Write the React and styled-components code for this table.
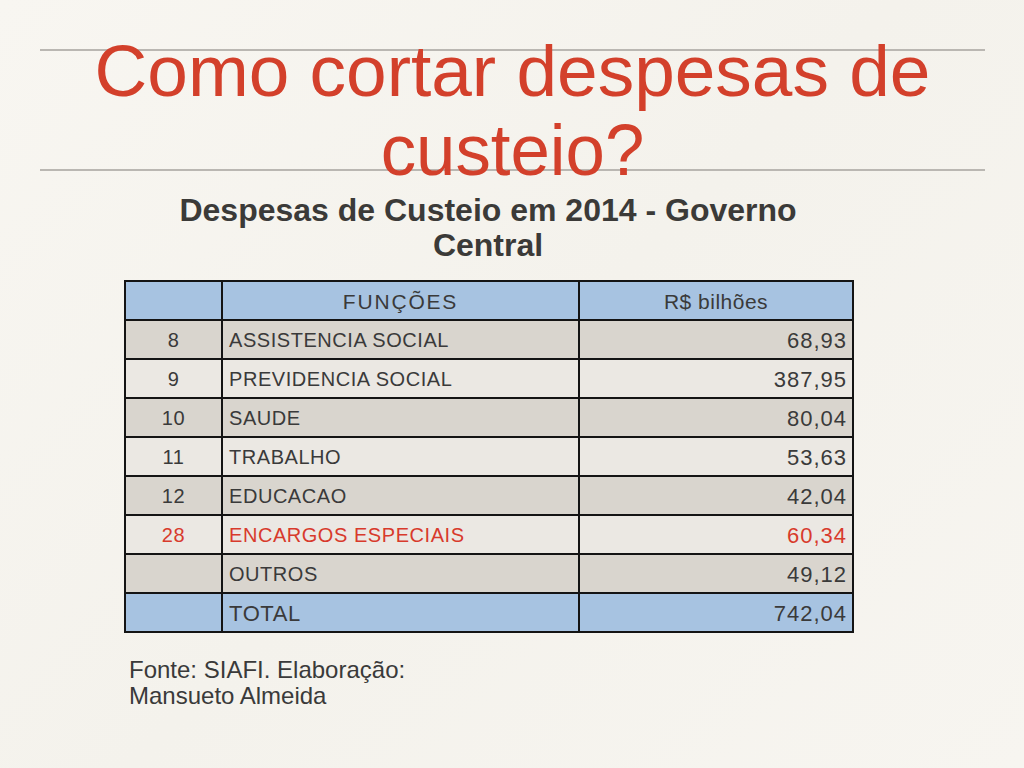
import React from "react";
import styled, { createGlobalStyle } from "styled-components";

const GlobalStyle = createGlobalStyle`
  body {
    margin: 0;
    background: #f6f4ef;
    font-family: "Liberation Sans", Arial, sans-serif;
  }
`;

const Page = styled.div`
  width: 1024px;
  height: 768px;
  overflow: hidden;
  display: flex;
  flex-direction: column;
  align-items: flex-start;
  background: linear-gradient(135deg, #f8f6f1 0%, #f4f2ec 50%, #f7f5f0 100%);
`;

const TitleBox = styled.div`
  align-self: stretch;
  margin: 49px 39px 0 40px;
  height: 118px;
  border-top: 2px solid #bab7b2;
  border-bottom: 2px solid #bab7b2;
`;

const Title = styled.h1`
  margin: -20px 0 0;
  font-weight: 400;
  font-size: 73px;
  line-height: 79px;
  color: #d3402b;
  text-align: center;
`;

const TitleLine = styled.span`
  display: block;
  transform: scaleX(${(p) => p.squeeze || 1});
  white-space: nowrap;
`;

const Subtitle = styled.h2`
  align-self: stretch;
  margin: 22px 0 0 -48px;
  font-size: 32px;
  line-height: 35px;
  font-weight: 700;
  color: #3b3a38;
  text-align: center;
`;

const SubLine = styled.span`
  display: block;
  white-space: nowrap;
`;

const Table = styled.div`
  margin: 17px 0 0 124px;
  display: grid;
  grid-template-columns: 95px 355px 272px;
  grid-auto-rows: 37px;
  gap: 2px;
  padding: 2px;
  background: #141414;
`;

const Cell = styled.div`
  display: flex;
  align-items: center;
  justify-content: ${(p) =>
    p.align === "right" ? "flex-end" : p.align === "center" ? "center" : "flex-start"};
  padding: 2px ${(p) => (p.align === "right" ? "5px" : "0")} 0
    ${(p) => (p.align === "left" ? "6px" : "0")};
  background: ${(p) =>
    p.tone === "blue" ? "#a7c3e1" : p.tone === "dark" ? "#d9d5ce" : "#ebe8e3"};
  color: ${(p) => (p.red ? "#d83a2c" : "#3a3a3a")};
  font-size: ${(p) => p.size || 20}px;
  letter-spacing: ${(p) => (p.spacing !== undefined ? p.spacing : 0.55)}px;
  white-space: nowrap;
`;

const Source = styled.p`
  margin: 24px 0 0 129px;
  font-size: 24px;
  line-height: 26px;
  color: #3a3a3a;
`;

const rows = [
  { code: "8", name: "ASSISTENCIA SOCIAL", value: "68,93" },
  { code: "9", name: "PREVIDENCIA SOCIAL", value: "387,95" },
  { code: "10", name: "SAUDE", value: "80,04" },
  { code: "11", name: "TRABALHO", value: "53,63" },
  { code: "12", name: "EDUCACAO", value: "42,04" },
  { code: "28", name: "ENCARGOS ESPECIAIS", value: "60,34", red: true },
  { code: "", name: "OUTROS", value: "49,12" },
];

function App() {
  return (
    <Page>
      <GlobalStyle />
      <TitleBox>
        <Title>
          <TitleLine squeeze={1}>Como cortar despesas de</TitleLine>
          <TitleLine squeeze={0.97}>custeio?</TitleLine>
        </Title>
      </TitleBox>
      <Subtitle>
        <SubLine>Despesas de Custeio em 2014 - Governo</SubLine>
        <SubLine>Central</SubLine>
      </Subtitle>
      <Table>
        <Cell tone="blue" />
        <Cell tone="blue" align="center" size={21} spacing={1.8}>
          FUNÇÕES
        </Cell>
        <Cell tone="blue" align="center" size={21} spacing={0.5}>
          R$ bilhões
        </Cell>
        {rows.map((r, i) => {
          const tone = i % 2 === 0 ? "dark" : "light";
          return (
            <React.Fragment key={r.name}>
              <Cell tone={tone} align="center" red={r.red}>
                {r.code}
              </Cell>
              <Cell tone={tone} align="left" red={r.red}>
                {r.name}
              </Cell>
              <Cell tone={tone} align="right" red={r.red} size={22} spacing={1}>
                {r.value}
              </Cell>
            </React.Fragment>
          );
        })}
        <Cell tone="blue" />
        <Cell tone="blue" align="left" size={22} spacing={0.6}>
          TOTAL
        </Cell>
        <Cell tone="blue" align="right" size={22} spacing={1}>
          742,04
        </Cell>
      </Table>
      <Source>
        Fonte: SIAFI. Elaboração:
        <br />
        Mansueto Almeida
      </Source>
    </Page>
  );
}

export default App;
